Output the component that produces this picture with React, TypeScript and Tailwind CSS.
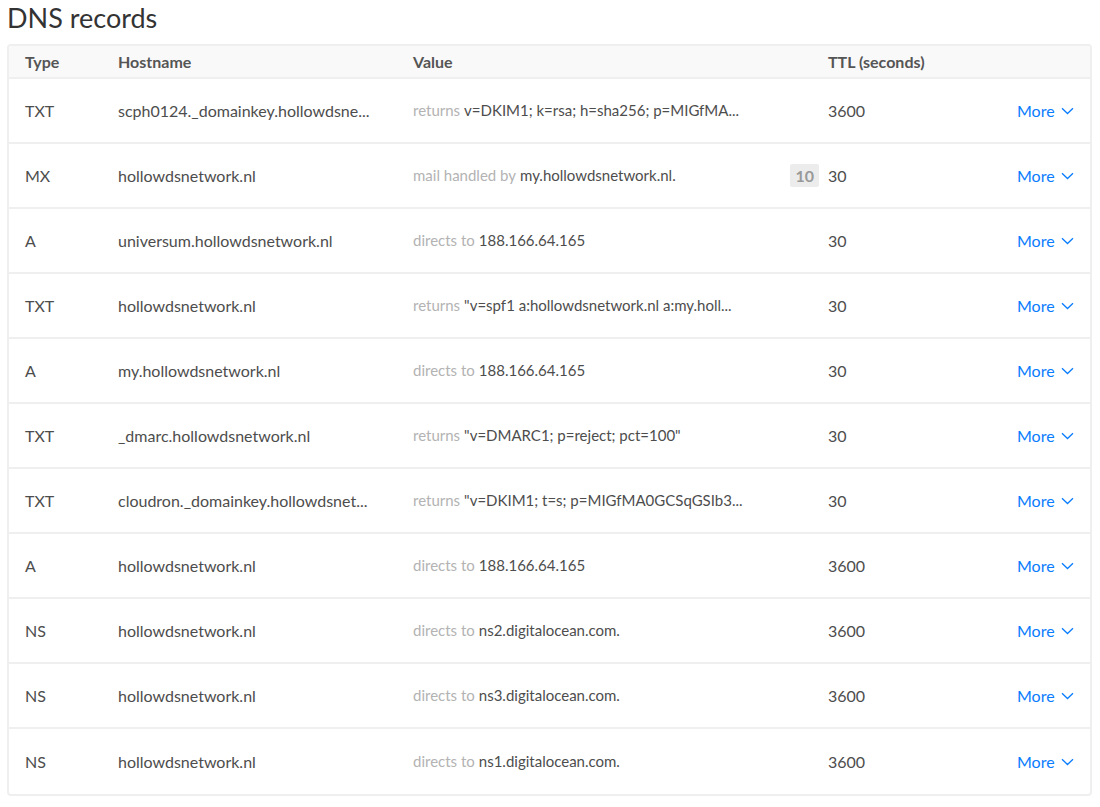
import React from "react";

type Rec = { type: string; host: string; pre: string; val: string; prio?: string; ttl: string };

const records: Rec[] = [
  { type: "TXT", host: "scph0124._domainkey.hollowdsne...", pre: "returns", val: "v=DKIM1; k=rsa; h=sha256; p=MIGfMA...", ttl: "3600" },
  { type: "MX", host: "hollowdsnetwork.nl", pre: "mail handled by", val: "my.hollowdsnetwork.nl.", prio: "10", ttl: "30" },
  { type: "A", host: "universum.hollowdsnetwork.nl", pre: "directs to", val: "188.166.64.165", ttl: "30" },
  { type: "TXT", host: "hollowdsnetwork.nl", pre: "returns", val: "\"v=spf1 a:hollowdsnetwork.nl a:my.holl...", ttl: "30" },
  { type: "A", host: "my.hollowdsnetwork.nl", pre: "directs to", val: "188.166.64.165", ttl: "30" },
  { type: "TXT", host: "_dmarc.hollowdsnetwork.nl", pre: "returns", val: "\"v=DMARC1; p=reject; pct=100\"", ttl: "30" },
  { type: "TXT", host: "cloudron._domainkey.hollowdsnet...", pre: "returns", val: "\"v=DKIM1; t=s; p=MIGfMA0GCSqGSIb3...", ttl: "30" },
  { type: "A", host: "hollowdsnetwork.nl", pre: "directs to", val: "188.166.64.165", ttl: "3600" },
  { type: "NS", host: "hollowdsnetwork.nl", pre: "directs to", val: "ns2.digitalocean.com.", ttl: "3600" },
  { type: "NS", host: "hollowdsnetwork.nl", pre: "directs to", val: "ns3.digitalocean.com.", ttl: "3600" },
  { type: "NS", host: "hollowdsnetwork.nl", pre: "directs to", val: "ns1.digitalocean.com.", ttl: "3600" },
];

const font = { fontFamily: "Lato, 'Noto Sans', sans-serif" };

export default function App() {
  return (
    <div className="min-h-[807px] bg-white px-[7px] pt-[3px] text-[#4d4d4d]" style={font}>
      <h1 className="text-[27px] leading-[30px] text-[#333] mb-[11px]">DNS records</h1>
      <div className="w-[1085px] border-2 border-[#efefef] rounded-[4px] overflow-hidden text-[16px]">
        <div className="flex items-center h-[33px] bg-[#f9f9f9] border-b-2 border-[#efefef] font-bold text-[#555]">
          <div className="w-[109px] pl-[16px]">Type</div>
          <div className="w-[295px]">Hostname</div>
          <div className="w-[415px]">Value</div>
          <div>TTL (seconds)</div>
        </div>
        {records.map((r, i) => (
          <div key={i} className={"flex items-center h-[65px] " + (i < records.length - 1 ? "border-b-2 border-[#efefef]" : "")}>
            <div className="w-[109px] pl-[16px]">{r.type}</div>
            <div className="w-[295px] whitespace-nowrap">{r.host}</div>
            <div className="w-[415px] flex items-center pr-[9px] whitespace-nowrap text-[15px]">
              <span className="text-[#b3b3b3]">{r.pre}</span>
              <span className="ml-[4px]">{r.val}</span>
              {r.prio && (
                <span className="ml-auto bg-[#ececec] text-[#999] font-bold rounded-[2px] px-[5px] h-[23px] leading-[23px] text-[16px]">{r.prio}</span>
              )}
            </div>
            <div className="w-[189px]">{r.ttl}</div>
            <div className="flex items-center text-[#0a7cff]">
              <span>More</span>
              <svg className="ml-[6px] mt-[1px]" width="13" height="8" viewBox="0 0 13 8" fill="none">
                <path d="M1 1.2L6.5 6.5L12 1.2" stroke="#0a7cff" strokeWidth="1.3" />
              </svg>
            </div>
          </div>
        ))}
      </div>
    </div>
  );
}
